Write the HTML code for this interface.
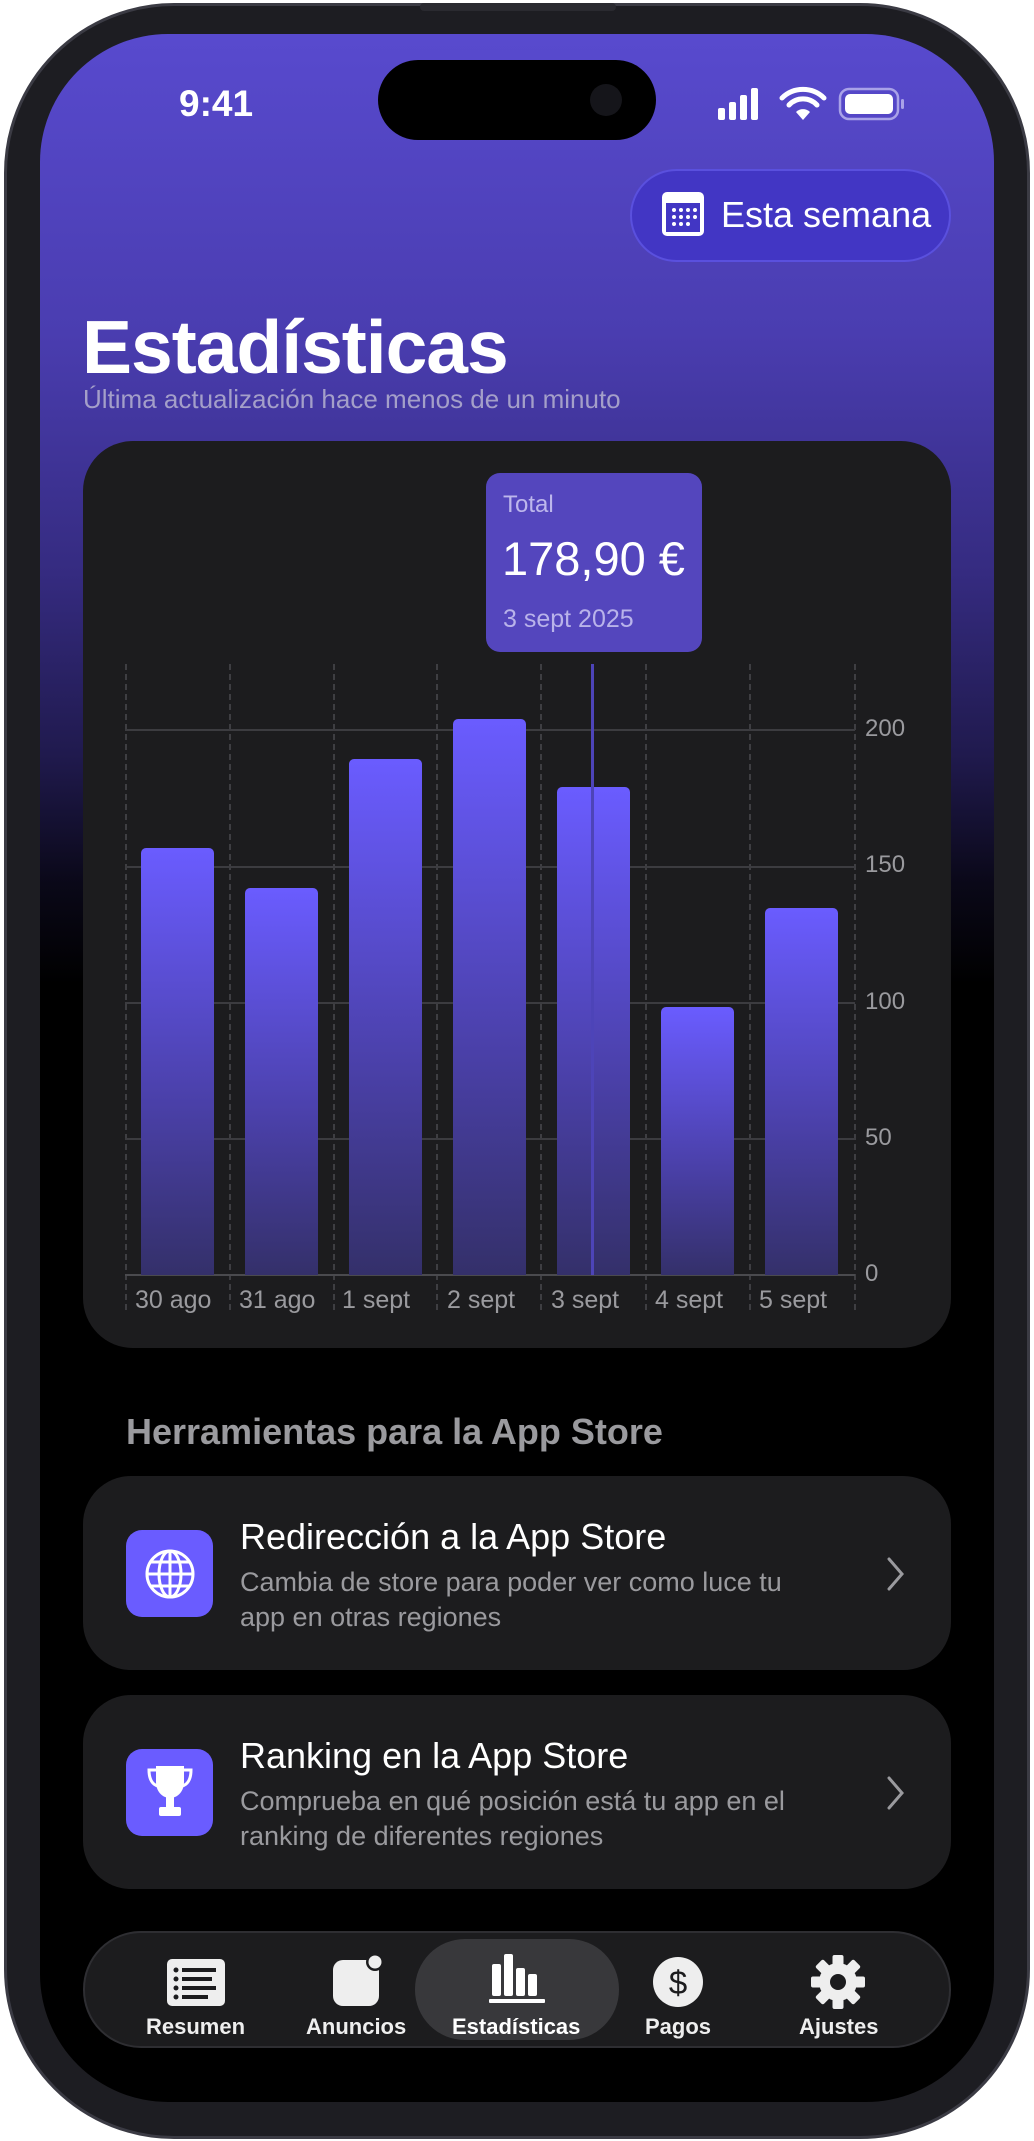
<!DOCTYPE html>
<html><head><meta charset="utf-8"><style>
*{margin:0;padding:0;box-sizing:border-box}
body{width:1034px;height:2141px;background:#fff;position:relative;overflow:hidden;font-family:"Liberation Sans",sans-serif}
.abs{position:absolute}
.frame{left:4px;top:3px;width:1026px;height:2136px;border-radius:170px;background:#1d1d22;border:3px solid #3b3b44}
.screen{left:40px;top:34px;width:954px;height:2068px;border-radius:128px;overflow:hidden;background:linear-gradient(180deg,#584ace 0px,#4a3db0 300px,#352b80 540px,#201a4e 720px,#0a0818 850px,#000 950px)}
.t{position:absolute;white-space:nowrap}
.card{position:absolute;background:#1c1c1e;border-radius:48px}
.grid{position:absolute;left:85px;width:730px;height:2px;background:#3c3c40}
.vl{position:absolute;top:630px;height:646px;border-left:2px dashed #3e3e42}
.bar{position:absolute;width:73px;border-radius:5px 5px 0 0;background:linear-gradient(180deg,#6a5cff 0%,#4a40a8 60%,#34306a 100%)}
.yl{position:absolute;left:825px;color:#9a9a9e;font-size:24px}
.xl{position:absolute;top:1252px;color:#9a9a9e;font-size:25px}
</style></head><body>
<div class="abs frame"></div>
<div class="abs" style="left:420px;top:3px;width:196px;height:8px;background:#2a2a30;border-radius:4px"></div>
<div class="abs screen">
  <div class="t" style="left:139px;top:49px;color:#fff;font-size:37px;font-weight:700">9:41</div>
  <div class="abs" style="left:338px;top:26px;width:278px;height:80px;border-radius:40px;background:#000"></div>
  <div class="abs" style="left:550px;top:50px;width:32px;height:32px;border-radius:16px;background:#15151a"></div>
  <svg class="abs" style="left:678px;top:52px" width="240" height="40">
    <rect x="0" y="22" width="7" height="12" rx="2" fill="#fff"/><rect x="11" y="16" width="7" height="18" rx="2" fill="#fff"/><rect x="22" y="9" width="7" height="25" rx="2" fill="#fff"/><rect x="33" y="2" width="7" height="32" rx="2" fill="#fff"/>
    <path d="M64 12a30 30 0 0 1 42 0" stroke="#fff" stroke-width="5" fill="none" stroke-linecap="round"/>
    <path d="M71 19a19 19 0 0 1 28 0" stroke="#fff" stroke-width="5" fill="none" stroke-linecap="round"/>
    <path d="M78 26l7 8 7-8a10 10 0 0 0-14 0z" fill="#fff"/>
    <rect x="122" y="3" width="58" height="30" rx="9" fill="none" stroke="#a9a2e8" stroke-width="2.5"/>
    <rect x="127" y="8" width="48" height="20" rx="5" fill="#fff"/>
    <rect x="183" y="13" width="3" height="10" rx="1.5" fill="#a9a2e8"/>
  </svg>
  <div class="abs" style="left:590px;top:135px;width:321px;height:93px;border-radius:47px;background:#4236c4;border:2px solid #5a50de"></div>
  <svg class="abs" style="left:620px;top:156px" width="48" height="50"><rect x="2" y="2" width="42" height="44" rx="5" fill="#fff"/><rect x="6" y="13" width="34" height="29" fill="#4236c4"/><g fill="#fff"><circle cx="14" cy="20" r="2"/><circle cx="21" cy="20" r="2"/><circle cx="28" cy="20" r="2"/><circle cx="35" cy="20" r="2"/><circle cx="14" cy="27" r="2"/><circle cx="21" cy="27" r="2"/><circle cx="28" cy="27" r="2"/><circle cx="35" cy="27" r="2"/><circle cx="14" cy="34" r="2"/><circle cx="21" cy="34" r="2"/><circle cx="28" cy="34" r="2"/></g></svg>
  <div class="t" style="left:681px;top:160px;color:#fff;font-size:36px">Esta semana</div>
  <div class="t" style="left:42px;top:270px;color:#fff;font-size:75px;font-weight:700;letter-spacing:-1px">Estadísticas</div>
  <div class="t" style="left:43px;top:350px;color:#a49fc9;font-size:26px">Última actualización hace menos de un minuto</div>

  <div class="card" style="left:43px;top:407px;width:868px;height:907px;border-radius:50px"></div>
  <div class="vl" style="left:85px"></div><div class="vl" style="left:189px"></div><div class="vl" style="left:293px"></div><div class="vl" style="left:396px"></div><div class="vl" style="left:500px"></div><div class="vl" style="left:605px"></div><div class="vl" style="left:709px"></div><div class="vl" style="left:814px"></div>
  <div class="grid" style="top:695px"></div><div class="grid" style="top:832px"></div><div class="grid" style="top:968px"></div><div class="grid" style="top:1104px"></div><div class="grid" style="top:1240px;background:#4a4a4e"></div>
  <div class="bar" style="left:101px;top:814px;height:427px"></div>
  <div class="bar" style="left:205px;top:854px;height:387px"></div>
  <div class="bar" style="left:309px;top:725px;height:516px"></div>
  <div class="bar" style="left:413px;top:685px;height:556px"></div>
  <div class="bar" style="left:517px;top:753px;height:488px"></div>
  <div class="bar" style="left:621px;top:973px;height:268px"></div>
  <div class="bar" style="left:725px;top:874px;height:367px"></div>
  <div class="abs" style="left:551px;top:630px;width:3px;height:611px;background:#4d44b8"></div>
  <div class="yl" style="top:681px">200</div><div class="yl" style="top:817px">150</div><div class="yl" style="top:954px">100</div><div class="yl" style="top:1090px">50</div><div class="yl" style="top:1226px">0</div>
  <div class="xl" style="left:95px">30 ago</div><div class="xl" style="left:199px">31 ago</div><div class="xl" style="left:302px">1 sept</div><div class="xl" style="left:407px">2 sept</div><div class="xl" style="left:511px">3 sept</div><div class="xl" style="left:615px">4 sept</div><div class="xl" style="left:719px">5 sept</div>
  <div class="abs" style="left:446px;top:439px;width:216px;height:179px;border-radius:14px;background:#5446bd"></div>
  <div class="t" style="left:463px;top:457px;color:#bdb7ec;font-size:24px">Total</div>
  <div class="t" style="left:462px;top:497px;color:#fff;font-size:47px">178,90 €</div>
  <div class="t" style="left:463px;top:571px;color:#b9b3ea;font-size:25px">3 sept 2025</div>

  <div class="t" style="left:86px;top:1377px;color:#9a9a9e;font-size:36px;font-weight:700">Herramientas para la App Store</div>

  <div class="card" style="left:43px;top:1442px;width:868px;height:194px"></div>
  <div class="abs" style="left:86px;top:1496px;width:87px;height:87px;border-radius:16px;background:#6a5cff"></div>
  <svg class="abs" style="left:104px;top:1514px" width="52" height="52" fill="none" stroke="#fff" stroke-width="3"><circle cx="26" cy="26" r="23"/><ellipse cx="26" cy="26" rx="11" ry="23"/><line x1="26" y1="3" x2="26" y2="49"/><line x1="3" y1="26" x2="49" y2="26"/><path d="M7 14h38M7 38h38"/></svg>
  <div class="t" style="left:200px;top:1482px;color:#fff;font-size:36px">Redirección a la App Store</div>
  <div class="t" style="left:200px;top:1531px;color:#9a9a9e;font-size:27px;line-height:35px">Cambia de store para poder ver como luce tu<br>app en otras regiones</div>
  <svg class="abs" style="left:846px;top:1522px" width="20" height="36" fill="none" stroke="#9a9a9e" stroke-width="3" stroke-linecap="round"><path d="M3 3l13 15-13 15"/></svg>

  <div class="card" style="left:43px;top:1661px;width:868px;height:194px"></div>
  <div class="abs" style="left:86px;top:1715px;width:87px;height:87px;border-radius:16px;background:#6a5cff"></div>
  <svg class="abs" style="left:104px;top:1730px" width="52" height="56" fill="#fff"><path d="M12 2h28v16c0 9-6 16-14 16S12 27 12 18z"/><path d="M12 6H5c0 10 4 15 9 16M40 6h7c0 10-4 15-9 16" fill="none" stroke="#fff" stroke-width="3"/><rect x="22" y="33" width="8" height="10"/><rect x="15" y="43" width="22" height="9" rx="2"/></svg>
  <div class="t" style="left:200px;top:1701px;color:#fff;font-size:36px">Ranking en la App Store</div>
  <div class="t" style="left:200px;top:1750px;color:#9a9a9e;font-size:27px;line-height:35px">Comprueba en qué posición está tu app en el<br>ranking de diferentes regiones</div>
  <svg class="abs" style="left:846px;top:1741px" width="20" height="36" fill="none" stroke="#9a9a9e" stroke-width="3" stroke-linecap="round"><path d="M3 3l13 15-13 15"/></svg>

  <div class="abs" style="left:43px;top:1897px;width:868px;height:117px;border-radius:58px;background:#1c1c1e;border:2px solid #2e2e32"></div>
  <div class="abs" style="left:375px;top:1905px;width:204px;height:101px;border-radius:50px;background:#38383b"></div>
  <svg class="abs" style="left:126px;top:1924px" width="60" height="50"><rect x="1" y="1" width="58" height="47" rx="5" fill="#eee"/><g fill="#1c1c1e"><circle cx="10" cy="12" r="2.5"/><circle cx="10" cy="21" r="2.5"/><circle cx="10" cy="30" r="2.5"/><circle cx="10" cy="39" r="2.5"/><rect x="16" y="10" width="34" height="4"/><rect x="16" y="19" width="30" height="4"/><rect x="16" y="28" width="34" height="4"/><rect x="16" y="37" width="26" height="4"/></g></svg>
  <svg class="abs" style="left:291px;top:1918px" width="56" height="56"><rect x="2" y="8" width="46" height="46" rx="10" fill="#eee"/><circle cx="44" cy="10" r="9" fill="#1c1c1e"/><circle cx="44" cy="10" r="6.5" fill="#eee"/></svg>
  <svg class="abs" style="left:449px;top:1918px" width="58" height="54" fill="#fff"><rect x="3" y="12" width="9" height="32" rx="2"/><rect x="15" y="2" width="9" height="42" rx="2"/><rect x="27" y="16" width="9" height="28" rx="2"/><rect x="39" y="22" width="9" height="22" rx="2"/><rect x="0" y="47" width="56" height="4" rx="1"/></svg>
  <svg class="abs" style="left:612px;top:1922px" width="54" height="54"><circle cx="26" cy="26" r="25" fill="#eee"/><text x="26" y="38" text-anchor="middle" font-size="33" font-family="Liberation Sans" fill="#1c1c1e">$</text></svg>
  <svg class="abs" style="left:770px;top:1920px" width="56" height="56" viewBox="0 0 56 56"><g fill="#eee" transform="translate(28 28)"><circle r="19"/><g id="tt"><rect x="-5.5" y="-27" width="11" height="12" rx="2"/></g><use href="#tt" transform="rotate(45)"/><use href="#tt" transform="rotate(90)"/><use href="#tt" transform="rotate(135)"/><use href="#tt" transform="rotate(180)"/><use href="#tt" transform="rotate(225)"/><use href="#tt" transform="rotate(270)"/><use href="#tt" transform="rotate(315)"/></g><circle cx="28" cy="28" r="8" fill="#1c1c1e"/></svg>
  <div class="t" style="left:106px;top:1980px;color:#eee;font-size:22px;font-weight:700">Resumen</div>
  <div class="t" style="left:266px;top:1980px;color:#eee;font-size:22px;font-weight:700">Anuncios</div>
  <div class="t" style="left:412px;top:1980px;color:#fff;font-size:22px;font-weight:700">Estadísticas</div>
  <div class="t" style="left:605px;top:1980px;color:#eee;font-size:22px;font-weight:700">Pagos</div>
  <div class="t" style="left:759px;top:1980px;color:#eee;font-size:22px;font-weight:700">Ajustes</div>
</div>
</body></html>
